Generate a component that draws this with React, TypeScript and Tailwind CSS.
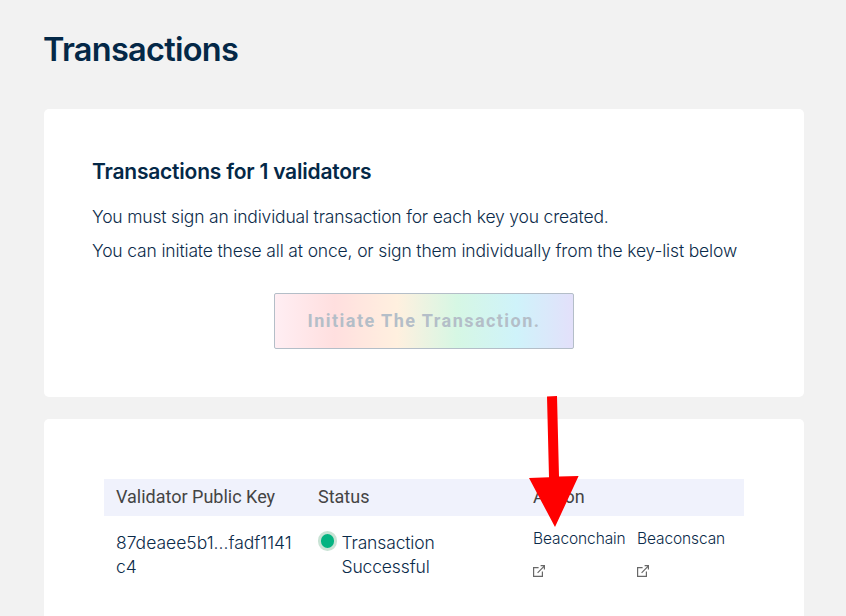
const ExternalIcon = () => (
  <svg width="13" height="14" viewBox="0 0 13 14" fill="none" stroke="#686868" strokeWidth="1.2" className="block">
    <path d="M5.6 3.6H0.6V12.4H9.4V7.6" />
    <path d="M4.6 8.8L11.2 2.2M7.6 1.6H11.4V5.6" />
  </svg>
);

const ExplorerLink = ({ label, className }: { label: string; className: string }) => (
  <a className={`flex flex-col ${className}`}>
    <span className="whitespace-nowrap text-[15.5px] leading-6 tracking-[-0.1px]">{label}</span>
    <span className="mt-[13px]">
      <ExternalIcon />
    </span>
  </a>
);

export default function App() {
  return (
    <div className="relative h-[616px] w-[846px] overflow-hidden bg-[#f2f2f2] px-11 pt-[28px] font-['Inter',sans-serif] text-[#0b2b4a]">
      <h1 className="-ml-px h-[81px] whitespace-nowrap text-[32.5px] font-semibold leading-[44px] tracking-[-0.72px] text-[#042847]">
        Transactions
      </h1>

      <section className="h-[288px] w-[760px] rounded-[5px] bg-white px-12 pt-[48px]">
        <h2 className="whitespace-nowrap text-[21px] font-semibold leading-[30px] tracking-[-0.21px] text-[#042847]">
          Transactions for 1 validators
        </h2>
        <div className="mt-[13px] whitespace-nowrap text-[17.5px] font-light leading-[34px]">
          <p className="tracking-[-0.18px]">You must sign an individual transaction for each key you created.</p>
          <p className="tracking-[-0.16px]">You can initiate these all at once, or sign them individually from the key-list below</p>
        </div>
        <button className="mx-auto mt-[25px] flex h-14 w-[300px] items-center justify-center rounded-[2px] border border-[#b4bec8] bg-[linear-gradient(90deg,#ffeef3_0%,#ffdfdf_20%,#fff0df_41%,#d6f7e4_61%,#cff3fa_81%,#e3e0fa_100%)] pb-0.5 font-['Roboto',sans-serif] text-[18px] font-bold tracking-[1.45px] text-[#b4bec8]">
          <span className="whitespace-nowrap">Initiate The Transaction.</span>
        </button>
      </section>

      <section className="mt-[22px] h-[240px] w-[760px] rounded-[5px] bg-white px-[60px] pt-[60px]">
        <div className="grid h-[37px] grid-cols-[202px_215px_1fr] items-center bg-[#f0f2fc] pb-0.5 pl-3 font-['Roboto',sans-serif] text-[18px] text-[#444]">
          <span>Validator Public Key</span>
          <span>Status</span>
          <span>Action</span>
        </div>
        <div className="grid grid-cols-[202px_215px_1fr] pl-3 font-light">
          <div className="pt-[15px] text-[17.5px] leading-6">
            87deaee5b1...fadf1141
            <br />
            c4
          </div>
          <div className="flex pt-[15px] text-[17.5px] leading-6 tracking-[-0.14px]">
            <span className="mr-[4.5px] h-5 w-[19px] shrink-0 rounded-full border-[3px] border-[#c9e3d5] bg-[#04b381]" />
            <span>
              Transaction
              <br />
              Successful
            </span>
          </div>
          <div className="flex pt-[11px]">
            <ExplorerLink label="Beaconchain" className="w-[104px]" />
            <ExplorerLink label="Beaconscan" className="w-[90px]" />
          </div>
        </div>
      </section>

      <svg className="absolute left-[520px] top-[385px]" width="80" height="150" viewBox="0 0 80 150">
        <path d="M27 11.4L37 11L39 91.6L58.6 91L35 142L9 93L29 92.2Z" fill="#f00" />
      </svg>
    </div>
  );
}
